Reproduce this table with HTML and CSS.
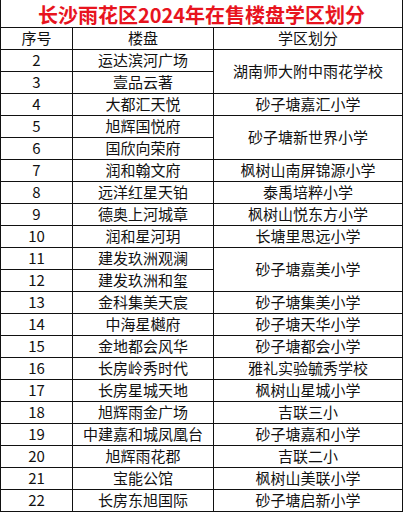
FILE: index.html
```html
<!DOCTYPE html>
<html lang="zh-CN">
<head>
<meta charset="utf-8">
<title>长沙雨花区2024年在售楼盘学区划分</title>
<link rel="stylesheet" href="styles.css">
</head>
<body>
<table class="sheet">
  <colgroup>
    <col class="c1">
    <col class="c2">
    <col class="c3">
  </colgroup>
  <thead>
    <tr class="title-row"><th colspan="3" class="title">长沙雨花区2024年在售楼盘学区划分</th></tr>
    <tr class="row head"><th>序号</th><th>楼盘</th><th>学区划分</th></tr>
  </thead>
  <tbody>
    <tr class="row"><td>2</td><td>运达滨河广场</td><td rowspan="2">湖南师大附中雨花学校</td></tr>
    <tr class="row"><td>3</td><td>壹品云著</td></tr>
    <tr class="row"><td>4</td><td>大都汇天悦</td><td>砂子塘嘉汇小学</td></tr>
    <tr class="row"><td>5</td><td>旭辉国悦府</td><td rowspan="2">砂子塘新世界小学</td></tr>
    <tr class="row"><td>6</td><td>国欣向荣府</td></tr>
    <tr class="row"><td>7</td><td>润和翰文府</td><td>枫树山南屏锦源小学</td></tr>
    <tr class="row"><td>8</td><td>远洋红星天铂</td><td>泰禹培粹小学</td></tr>
    <tr class="row"><td>9</td><td>德奥上河城章</td><td>枫树山悦东方小学</td></tr>
    <tr class="row"><td>10</td><td>润和星河玥</td><td>长塘里思远小学</td></tr>
    <tr class="row"><td>11</td><td>建发玖洲观澜</td><td rowspan="2">砂子塘嘉美小学</td></tr>
    <tr class="row"><td>12</td><td>建发玖洲和玺</td></tr>
    <tr class="row"><td>13</td><td>金科集美天宸</td><td>砂子塘集美小学</td></tr>
    <tr class="row"><td>14</td><td>中海星樾府</td><td>砂子塘天华小学</td></tr>
    <tr class="row"><td>15</td><td>金地都会风华</td><td>砂子塘都会小学</td></tr>
    <tr class="row"><td>16</td><td>长房岭秀时代</td><td>雅礼实验毓秀学校</td></tr>
    <tr class="row"><td>17</td><td>长房星城天地</td><td>枫树山星城小学</td></tr>
    <tr class="row"><td>18</td><td>旭辉雨金广场</td><td>吉联三小</td></tr>
    <tr class="row"><td>19</td><td>中建嘉和城凤凰台</td><td>砂子塘嘉和小学</td></tr>
    <tr class="row"><td>20</td><td>旭辉雨花郡</td><td>吉联二小</td></tr>
    <tr class="row"><td>21</td><td>宝能公馆</td><td>枫树山美联小学</td></tr>
    <tr class="row"><td>22</td><td>长房东旭国际</td><td>砂子塘启新小学</td></tr>
  </tbody>
</table>
</body>
</html>
```
FILE: styles.css
```css
html, body {
  margin: 0;
  padding: 0;
  background: #ffffff;
}

body {
  font-family: "Noto Sans CJK SC", "Noto Sans", sans-serif;
  color: #111111;
}

.sheet {
  border-collapse: collapse;
  table-layout: fixed;
  width: 402px;
  margin: 0;
}

.c1 { width: 72px; }
.c2 { width: 141px; }
.c3 { width: 189px; }

.sheet th,
.sheet td {
  border: 1px solid #111111;
  padding: 0;
  text-align: center;
  vertical-align: middle;
  font-size: 15px;
  font-weight: normal;
  line-height: 20px;
  white-space: nowrap;
}

.title-row {
  height: 27px;
}

.sheet .title {
  border-top: none;
  color: #e8141e;
  font-size: 20px;
  font-weight: bold;
  vertical-align: top;
  padding-top: 3px;
  line-height: 23px;
  letter-spacing: 0;
}

.row {
  height: 22px;
}
```
